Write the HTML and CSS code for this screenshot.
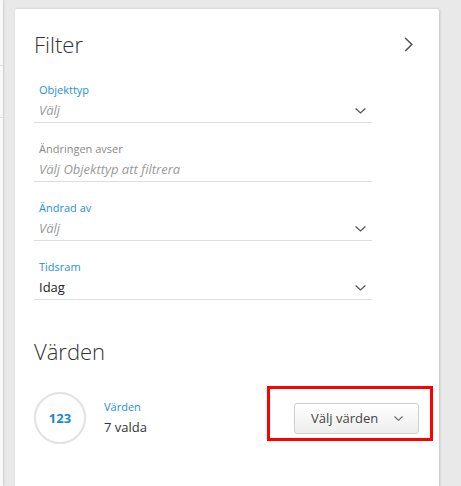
FILE: index.html
```html
<!DOCTYPE html>
<html lang="sv">
<head>
<meta charset="utf-8">
<title>Filter</title>
<link rel="stylesheet" href="styles.css">
</head>
<body>
<div class="page">
  <div class="sliver">
    <div class="sliver-line first"></div>
    <div class="sliver-line second"></div>
  </div>
  <div class="card">
    <div class="card-head">
      <h1 class="title">Filter</h1>
      <svg class="chev-right" width="9" height="15" viewBox="0 0 9 15"><path d="M1.2 1 L7.8 7.5 L1.2 14" fill="none" stroke="#555" stroke-width="1.6"/></svg>
    </div>
    <div class="fields">
      <div class="field">
        <div class="label blue">Objekttyp</div>
        <div class="value placeholder">Välj<svg class="chev-down" width="11" height="6" viewBox="0 0 11 6"><path d="M0.6 0.6 L5.5 5 L10.4 0.6" fill="none" stroke="#555" stroke-width="1.3"/></svg></div>
      </div>
      <div class="field">
        <div class="label gray">Ändringen avser</div>
        <div class="value placeholder">Välj Objekttyp att filtrera</div>
      </div>
      <div class="field">
        <div class="label blue">Ändrad av</div>
        <div class="value placeholder">Välj<svg class="chev-down" width="11" height="6" viewBox="0 0 11 6"><path d="M0.6 0.6 L5.5 5 L10.4 0.6" fill="none" stroke="#555" stroke-width="1.3"/></svg></div>
      </div>
      <div class="field">
        <div class="label blue">Tidsram</div>
        <div class="value">Idag<svg class="chev-down" width="11" height="6" viewBox="0 0 11 6"><path d="M0.6 0.6 L5.5 5 L10.4 0.6" fill="none" stroke="#555" stroke-width="1.3"/></svg></div>
      </div>
    </div>
    <h2 class="title section">Värden</h2>
    <div class="values-row">
      <div class="circle">123</div>
      <div class="values-text">
        <div class="label blue">Värden</div>
        <div class="count">7 valda</div>
      </div>
      <div class="btn-wrap">
        <button class="btn">Välj värden<svg class="btn-chev" width="9" height="5" viewBox="0 0 9 5"><path d="M0.5 0.5 L4.5 4.3 L8.5 0.5" fill="none" stroke="#666" stroke-width="1.1"/></svg></button>
        <div class="highlight"></div>
      </div>
    </div>
  </div>
</div>
</body>
</html>
```

FILE: styles.css
```css
html, body {
  margin: 0;
  padding: 0;
}
body {
  background: #e9e9e9;
  font-family: "Open Sans", "Noto Sans", sans-serif;
  width: 461px;
  height: 486px;
  overflow: hidden;
}
.page {
  display: flex;
  align-items: flex-start;
  height: 486px;
}
.sliver {
  width: 3px;
  height: 486px;
  background: #f8f8f8;
  box-shadow: 1px 0 2px rgba(0,0,0,0.12);
  flex: none;
}
.sliver-line {
  height: 1px;
  background: #dcdcdc;
}
.sliver-line.first {
  margin-top: 65px;
}
.sliver-line.second {
  margin-top: 51px;
}
.card {
  margin-left: 12px;
  margin-top: 9px;
  width: 424px;
  height: 490px;
  background: #fff;
  border-radius: 2px 2px 0 0;
  box-shadow: 1px 0 3px rgba(0,0,0,0.16);
  box-sizing: border-box;
  padding: 20px 20px 0 19px;
  flex: none;
}
.card-head {
  display: flex;
  justify-content: space-between;
  align-items: center;
}
.title {
  margin: 0;
  font-size: 22px;
  font-weight: 300;
  line-height: 30px;
  color: #333;
}
.chev-right {
  display: block;
  margin-right: 6px;
}
.fields {
  width: 338px;
  margin-top: 5px;
  display: flex;
  flex-direction: column;
}
.field {
  margin-top: 18px;
  padding: 0 6px 2px 5px;
  border-bottom: 1px solid #dedede;
}
.label {
  font-size: 11px;
  line-height: 16px;
}
.blue {
  color: #1f8fd8;
}
.gray {
  color: #8a8a8a;
}
.value {
  margin-top: 2px;
  font-size: 13px;
  line-height: 20px;
  color: #222;
  display: flex;
  justify-content: space-between;
  align-items: center;
}
.placeholder {
  font-style: italic;
  color: #9a9a9a;
}
.chev-down {
  display: block;
  margin-top: 2px;
}
.section {
  margin-top: 36px;
}
.values-row {
  margin-top: 26px;
  display: flex;
  align-items: center;
}
.circle {
  width: 52px;
  height: 52px;
  box-sizing: border-box;
  border: 2px solid #e2e2e2;
  border-radius: 50%;
  display: flex;
  align-items: center;
  justify-content: center;
  font-size: 13px;
  font-weight: 700;
  color: #1b87cf;
  flex: none;
}
.values-text {
  margin-left: 18px;
}
.count {
  margin-top: 2px;
  font-size: 13px;
  line-height: 20px;
  color: #333;
}
.btn-wrap {
  margin-left: auto;
  position: relative;
}
.btn {
  display: flex;
  align-items: center;
  height: 31px;
  width: 125px;
  box-sizing: border-box;
  padding: 0 0 0 16px;
  border: 1px solid #cfcfcf;
  border-radius: 3px;
  background: linear-gradient(#ffffff, #ededed);
  font-family: "Open Sans", "Noto Sans", sans-serif;
  font-size: 13px;
  color: #444;
  cursor: pointer;
}
.btn-chev {
  display: block;
  margin-left: 16px;
}
.highlight {
  position: absolute;
  left: -27px;
  top: -17px;
  width: 166px;
  height: 55px;
  box-sizing: border-box;
  border: 3px solid #ff0000;
  pointer-events: none;
}
```
